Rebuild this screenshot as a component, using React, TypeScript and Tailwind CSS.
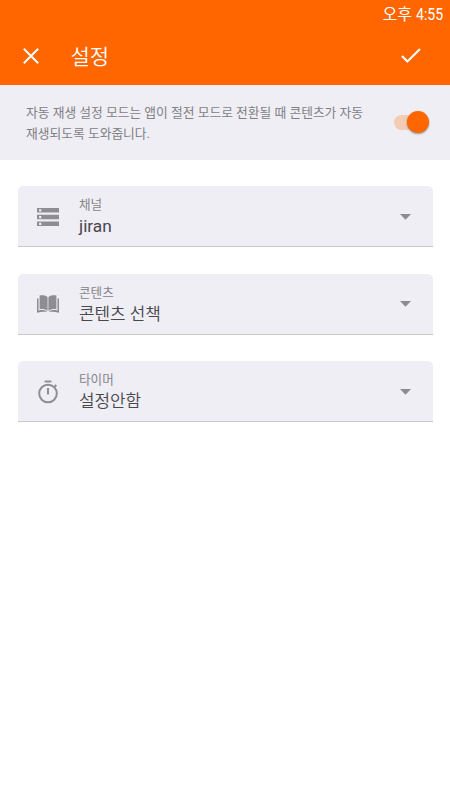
import type { ReactNode } from "react";

function StorageIcon() {
  return (
    <svg width="22" height="18" viewBox="0 0 22 18" fill="#8e8d92">
      <path
        fillRule="evenodd"
        d="M0 0h22v4.6H0zM2.1 1.3v2.2h2.2V1.3zM0 6.8h22v4.5H0zM2.1 8v2.2h2.2V8zM0 13.4h22V18H0zM2.1 14.7v2.2h2.2v-2.2z"
      />
    </svg>
  );
}

function BookIcon() {
  return (
    <svg width="22" height="18" viewBox="0 0 22 18" fill="#8e8d92">
      <path d="M10.6 2.2C8.8.5 6 0 2.6.6v13.4c3.4-.3 6.1.2 8 1.9zM11.4 2.2C13.2.5 16 0 19.4.6v13.4c-3.4-.3-6.1.2-8 1.9z" />
      <path d="M0 3.4h1.5v12.1c3-.7 5.8-.7 8.3.9v.5c-3-.5-6.3-.1-9.8.8zM22 3.4h-1.5v12.1c-3-.7-5.8-.7-8.3.9v.5c3-.5 6.3-.1 9.8.8z" />
    </svg>
  );
}

function TimerIcon() {
  return (
    <svg width="22" height="24" viewBox="0 0 22 24" fill="none" stroke="#8e8d92" strokeWidth="2">
      <circle cx="11" cy="13.5" r="8.8" />
      <path d="M7.6 1.5h6.8M11 8v6.5M17.3 7l2-2" />
    </svg>
  );
}

type SelectRowProps = { icon: ReactNode; label: string; value: string; valueClass: string };

function SelectRow({ icon, label, value, valueClass }: SelectRowProps) {
  return (
    <button className="flex h-[61px] w-full items-center rounded-t-[5px] border-b border-[#c9c8cf] bg-[#efeef4] pl-[19.5px] pr-[22px] pt-px text-left">
      <span className="flex w-[22px] justify-center">{icon}</span>
      <span className="ml-5 flex flex-1 flex-col whitespace-nowrap pt-px">
        <span className="text-[12.6px] leading-[18px] text-[#85848a]">{label}</span>
        <span className={`leading-6 text-[#48474c] ${valueClass}`}>{value}</span>
      </span>
      <svg width="11" height="6" viewBox="0 0 11 6" fill="#8c8b8f">
        <path d="M0 0h11L5.5 5.8z" />
      </svg>
    </button>
  );
}

export default function App() {
  return (
    <div className="flex h-[800px] w-[450px] flex-col bg-white font-[Roboto,'Noto_Sans_CJK_KR',sans-serif]">
      <header className="h-[85px] bg-[#ff6600] text-white">
        <div className="flex h-7 items-center justify-end pr-[6px] pt-[2px] text-[16px] leading-7">
          <span>오후</span>
          <span className="ml-1 w-[28px] origin-left scale-x-[0.88] whitespace-nowrap">4:55</span>
        </div>
        <div className="flex h-[55px] items-center pl-[22.5px] pr-[29.5px]">
          <svg width="16" height="16" viewBox="0 0 16 16" fill="none" stroke="currentColor" strokeWidth="2">
            <path d="M.8.8l14.4 14.4M15.2.8L.8 15.2" />
          </svg>
          <h1 className="ml-8 flex-1 pt-[3px] text-[21px] font-[350] leading-7">설정</h1>
          <svg width="20" height="15" viewBox="0 0 20 15" fill="none" stroke="currentColor" strokeWidth="2.1">
            <path d="M1 8l5.4 5.4L19 .9" />
          </svg>
        </div>
      </header>
      <section className="flex h-[75px] items-center justify-between bg-[#efeef4] pl-[26px] pr-[21px]">
        <p className="whitespace-nowrap text-[12.78px] leading-[21px] text-[#807f85]">
          자동 재생 설정 모드는 앱이 절전 모드로 전환될 때 콘텐츠가 자동
          <br />
          재생되도록 도와줍니다.
        </p>
        <button role="switch" aria-checked="true" className="flex h-[15px] w-[35px] items-center justify-end rounded-full bg-[#f4ccb3]">
          <span className="mb-px size-[22px] shrink-0 rounded-full bg-[#ff6600] shadow-[0_1px_2px_rgba(0,0,0,0.4)]" />
        </button>
      </section>
      <main className="flex flex-col gap-[26.5px] px-[17.5px] pt-[26px]">
        <SelectRow icon={<StorageIcon />} label="채널" value="jiran" valueClass="text-[17.3px]" />
        <SelectRow icon={<BookIcon />} label="콘텐츠" value="콘텐츠 선책" valueClass="text-[16.9px] font-[350]" />
        <SelectRow icon={<TimerIcon />} label="타이머" value="설정안함" valueClass="text-[16.9px] font-[350]" />
      </main>
    </div>
  );
}
